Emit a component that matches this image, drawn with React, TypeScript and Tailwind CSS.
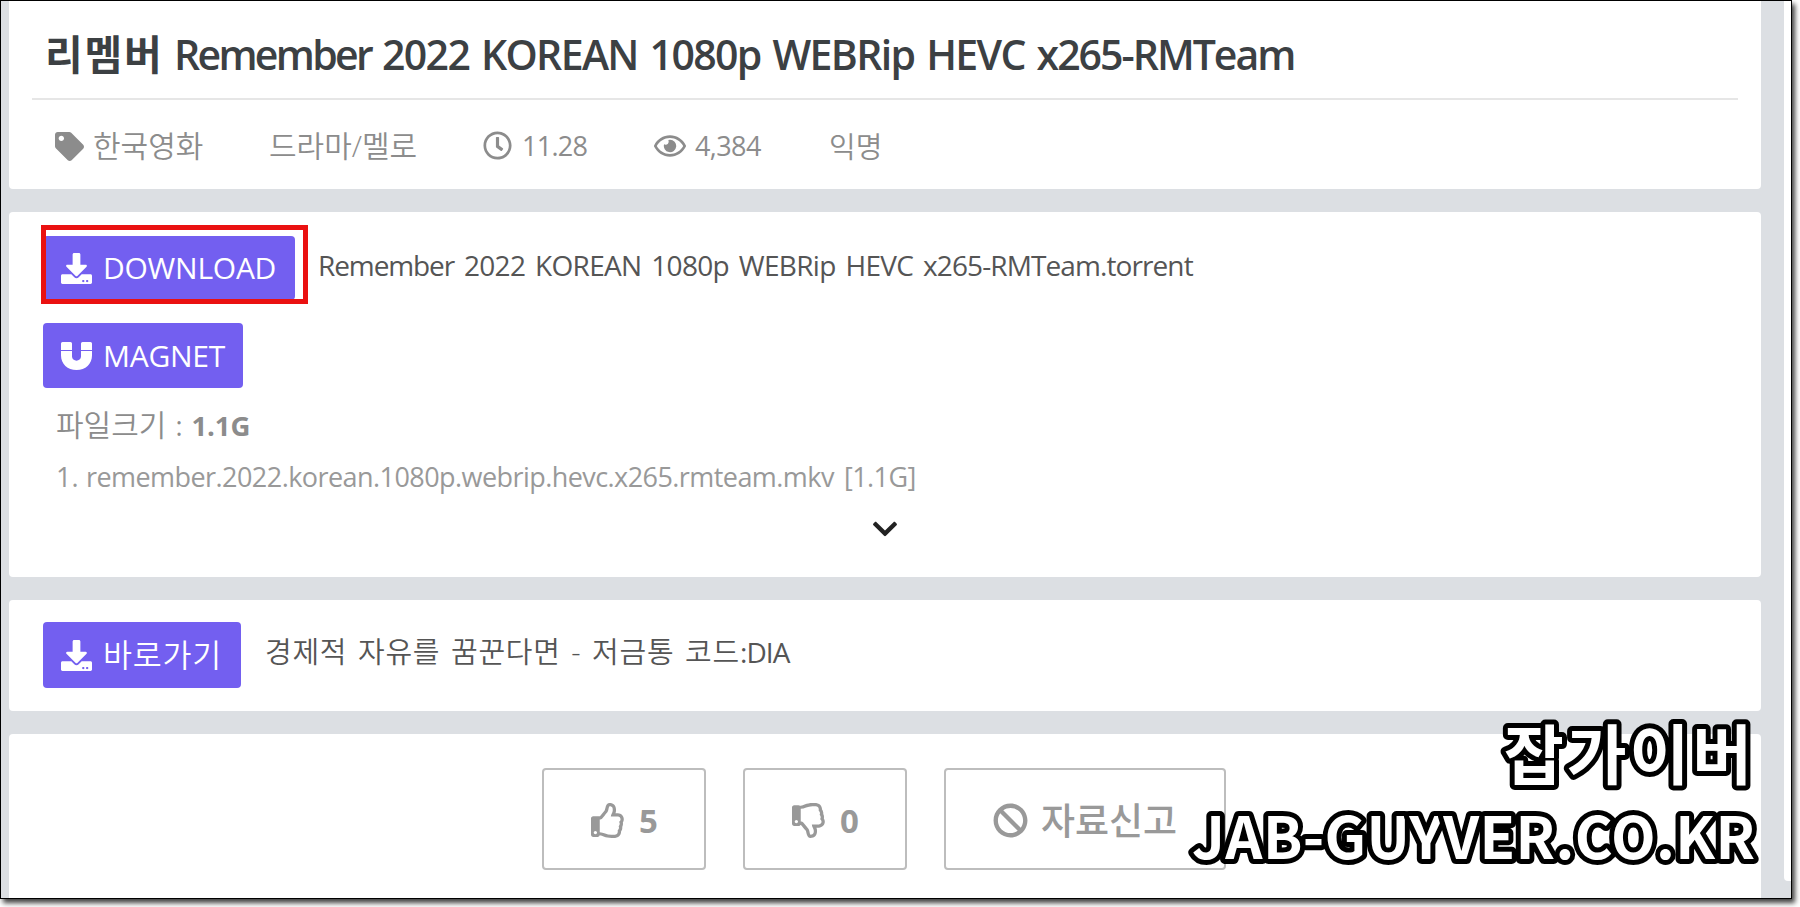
import React from 'react';
import {
  FaBan,
  FaChevronDown,
  FaDownload,
  FaRegClock,
  FaRegEye,
  FaRegThumbsDown,
  FaRegThumbsUp,
  FaTag,
} from 'react-icons/fa';

interface ActionButtonProps {
  icon: React.ReactNode;
  label: string;
  className?: string;
}

// Purple download / magnet / shortcut buttons
const ActionButton: React.FC<ActionButtonProps> = ({ icon, label, className = '' }) => (
  <button
    className={`flex shrink-0 items-center gap-[11px] rounded bg-[#735ff0] pl-[18px] leading-none whitespace-nowrap text-white ${className}`}
  >
    <span className="text-[31px]">{icon}</span>
    <span>{label}</span>
  </button>
);

interface VoteButtonProps {
  icon: React.ReactNode;
  label: string;
  className?: string;
}

const VoteButton: React.FC<VoteButtonProps> = ({ icon, label, className = '' }) => (
  <button
    className={`flex h-[102px] items-center rounded border-2 border-[#bdbdbd] pt-[2px] pl-[47px] leading-none whitespace-nowrap text-[#999] ${className}`}
  >
    <span className="text-[35px]">{icon}</span>
    <span>{label}</span>
  </button>
);

const MagnetIcon: React.FC = () => (
  <svg viewBox="0 0 31 28" className="h-[28px] w-[31px]" fill="currentColor">
    <path d="M1.5 0H9.5Q11 0 11 1.5V8H0V1.5Q0 0 1.5 0ZM21.5 0H29.5Q31 0 31 1.5V8H20V1.5Q20 0 21.5 0Z" />
    <path d="M0 9H11V14.5C11 20 20 20 20 14.5V9H31V13.5C31 22 24.5 28 15.5 28S0 22 0 13.5Z" />
  </svg>
);

// Outlined site mark, needs round stroke joins
const Watermark: React.FC = () => (
  <svg
    viewBox="0 -40 620 230"
    className="absolute top-[670px] right-[10px] h-[230px] w-[620px] overflow-visible fill-white stroke-black stroke-[10px] font-['Noto_Sans_CJK_KR',sans-serif] font-bold [paint-order:stroke_fill]"
    strokeLinejoin="round"
    strokeLinecap="round"
  >
    <text x="334" y="69" fontSize="65" textLength="248" lengthAdjust="spacing">
      잡가이버
    </text>
    <text x="22" y="149" fontSize="58" textLength="563" lengthAdjust="spacing">
      JAB-GUYVER.CO.KR
    </text>
  </svg>
);

const App: React.FC = () => {
  return (
    <div className="relative h-[907px] w-[1800px] overflow-hidden bg-white font-['Open_Sans','Noto_Sans_CJK_KR',sans-serif]">
      <div className="flex h-[899px] w-[1792px] overflow-hidden border border-black bg-[#dcdfe3] shadow-[3px_4px_5px_rgba(0,0,0,0.75)]">
        <main className="ml-2 flex w-[1752px] shrink-0 flex-col gap-[23px]">
          {/* Title and meta */}
          <section className="h-[188px] shrink-0 rounded-b bg-white px-[23px]">
            <h1 className="flex h-[99px] items-baseline border-b-2 border-[#e6e6e6] pl-[13px] text-[41px] leading-[106px] font-semibold whitespace-nowrap text-[#3c4043]">
              <span className="w-[129px] font-bold tracking-[1.8px]">리멤버</span>
              <span className="w-[208px] tracking-[-2.7px]">Remember</span>
              <span className="tracking-[-1.65px] [word-spacing:2.8px]">
                2022 KOREAN 1080p WEBRip HEVC{' '}
                <span className="tracking-[-2px]">x265-RMTeam</span>
              </span>
            </h1>
            <div className="flex h-[92px] items-center pl-[23px] text-[27px] leading-none font-[350] whitespace-nowrap text-[#8c8c8c]">
              <span className="flex w-[214px] items-center gap-[9px]">
                <FaTag className="text-[29px]" />
                <span className="text-[30px]">한국영화</span>
              </span>
              <span className="w-[214px] text-[30px]">드라마/멜로</span>
              <span className="flex w-[171px] items-center gap-[10px] pb-[1px] font-normal tracking-[-0.7px]">
                <FaRegClock className="text-[29px]" />
                11.28
              </span>
              <span className="flex w-[175px] items-center gap-[9px] pb-[1px] font-normal tracking-[-0.6px]">
                <FaRegEye className="text-[32px]" />
                4,384
              </span>
              <span className="text-[29px]">익명</span>
            </div>
          </section>

          {/* Torrent files */}
          <section className="h-[365px] shrink-0 rounded bg-white pl-[34px]">
            <div className="flex items-start pt-[24px]">
              <div className="relative">
                <ActionButton
                  icon={<FaDownload />}
                  label="DOWNLOAD"
                  className="h-[64px] w-[252px] text-[30px] tracking-[-0.25px]"
                />
                {/* Highlight frame */}
                <div className="absolute -top-[11px] -left-[2px] h-[79px] w-[267px] border-[5px] border-[#ea1111]" />
              </div>
              <span className="ml-[23px] pt-[10px] text-[28px] leading-[38px] tracking-[-0.7px] whitespace-nowrap text-[#555]">
                <span className="tracking-[-1.1px]">Remember</span>
                <span className="[word-spacing:3.3px]"> 2022 KOREAN 1080p WEBRip HEVC </span>
                <span className="tracking-[-0.9px]">x265-RMTeam.torrent</span>
              </span>
            </div>
            <ActionButton
              icon={<MagnetIcon />}
              label="MAGNET"
              className="mt-[23px] h-[65px] w-[200px] text-[30px] tracking-[-0.25px]"
            />
            <div className="mt-[15px] flex h-[44px] items-baseline pl-[13px] text-[27px] leading-[44px] font-[350] whitespace-nowrap text-[#8c8c8c]">
              <span className="text-[30px]">파일크기</span>
              <span className="ml-[9px] font-normal">:</span>
              <span className="ml-[9px] text-[27.5px] font-bold tracking-[-0.1px]">1.1G</span>
            </div>
            <div className="mt-[8px] flex h-[44px] pl-[13px] text-[27px] leading-[44px] whitespace-nowrap text-[#999]">
              <span className="w-[30px]">1.</span>
              <span className="w-[758px] tracking-[-0.56px]">
                remember.2022.korean.1080p.webrip.hevc.x265.rmteam.mkv
              </span>
              <span className="tracking-[-0.6px]">[1.1G]</span>
            </div>
            <FaChevronDown className="mt-[16px] ml-[828px] text-[28px] text-[#222]" />
          </section>

          {/* Sponsored link */}
          <section className="flex h-[111px] shrink-0 items-center rounded bg-white pb-[1px] pl-[34px]">
            <ActionButton
              icon={<FaDownload />}
              label="바로가기"
              className="h-[66px] w-[198px] text-[31.5px] font-[350] tracking-[0.8px]"
            />
            <span className="ml-[24px] pb-[8px] text-[29px] leading-none font-[350] tracking-[0.75px] [word-spacing:2.4px] whitespace-nowrap text-[#555]">
              경제적 자유를 꿈꾼다면 - 저금통 코드
              <span className="text-[28px] font-normal tracking-[-0.9px]">:DIA</span>
            </span>
          </section>

          {/* Votes and report */}
          <section className="flex h-[180px] shrink-0 items-start gap-[37px] rounded-t bg-white pt-[34px] pl-[533px]">
            <VoteButton icon={<FaRegThumbsUp />} label="5" className="w-[164px] gap-[13px] text-[33px] font-bold" />
            <VoteButton icon={<FaRegThumbsDown />} label="0" className="w-[164px] gap-[13px] text-[33px] font-bold" />
            <VoteButton icon={<FaBan />} label="자료신고" className="w-[282px] gap-[13px] text-[37px] font-medium" />
          </section>
        </main>
        <aside className="ml-[23px] h-[880px] w-[10px] shrink-0 rounded-bl bg-white" />
      </div>

      <Watermark />
    </div>
  );
};

export default App;
